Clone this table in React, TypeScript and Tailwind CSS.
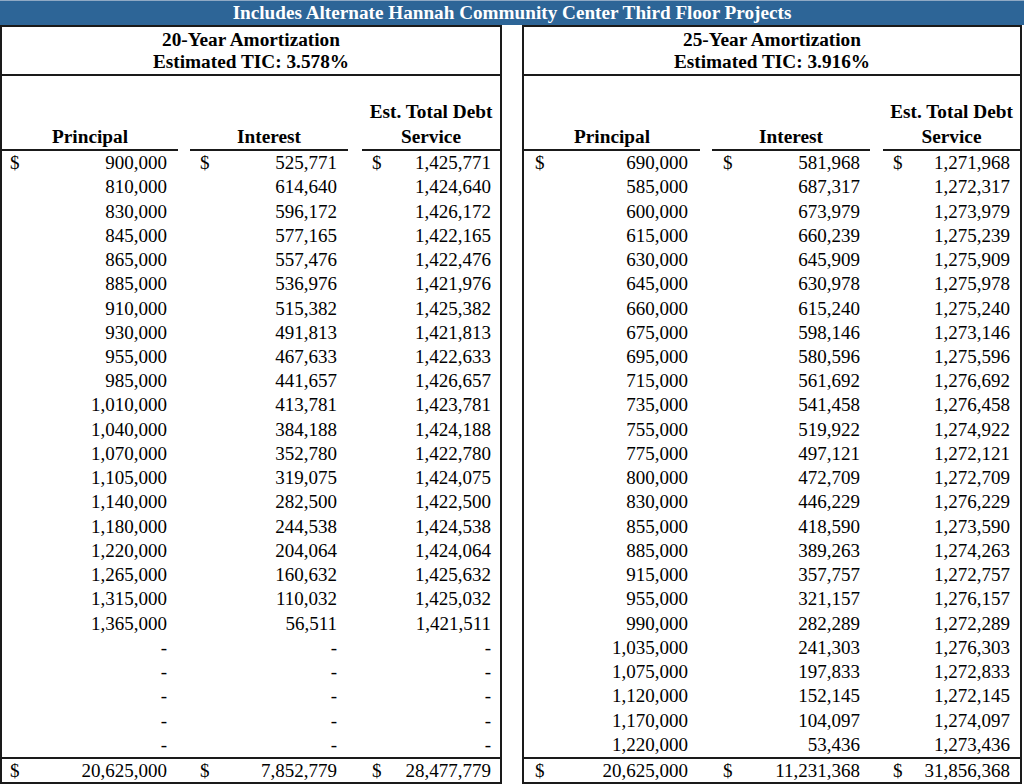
import React from "react";

type Cell = { dollar?: boolean; v: string };

const left20 = {
  p: ["900,000","810,000","830,000","845,000","865,000","885,000","910,000","930,000","955,000","985,000","1,010,000","1,040,000","1,070,000","1,105,000","1,140,000","1,180,000","1,220,000","1,265,000","1,315,000","1,365,000","-","-","-","-","-"],
  i: ["525,771","614,640","596,172","577,165","557,476","536,976","515,382","491,813","467,633","441,657","413,781","384,188","352,780","319,075","282,500","244,538","204,064","160,632","110,032","56,511","-","-","-","-","-"],
  t: ["1,425,771","1,424,640","1,426,172","1,422,165","1,422,476","1,421,976","1,425,382","1,421,813","1,422,633","1,426,657","1,423,781","1,424,188","1,422,780","1,424,075","1,422,500","1,424,538","1,424,064","1,425,632","1,425,032","1,421,511","-","-","-","-","-"],
  tot: ["20,625,000", "7,852,779", "28,477,779"],
};

const right25 = {
  p: ["690,000","585,000","600,000","615,000","630,000","645,000","660,000","675,000","695,000","715,000","735,000","755,000","775,000","800,000","830,000","855,000","885,000","915,000","955,000","990,000","1,035,000","1,075,000","1,120,000","1,170,000","1,220,000"],
  i: ["581,968","687,317","673,979","660,239","645,909","630,978","615,240","598,146","580,596","561,692","541,458","519,922","497,121","472,709","446,229","418,590","389,263","357,757","321,157","282,289","241,303","197,833","152,145","104,097","53,436"],
  t: ["1,271,968","1,272,317","1,273,979","1,275,239","1,275,909","1,275,978","1,275,240","1,273,146","1,275,596","1,276,692","1,276,458","1,274,922","1,272,121","1,272,709","1,276,229","1,273,590","1,274,263","1,272,757","1,276,157","1,272,289","1,276,303","1,272,833","1,272,145","1,274,097","1,273,436"],
  tot: ["20,625,000", "11,231,368", "31,856,368"],
};

function Num({ c, pad }: { c: Cell; pad: string }) {
  return (
    <div className={`flex items-center justify-between ${pad}`}>
      <span>{c.dollar ? "$" : ""}</span>
      <span>{c.v}</span>
    </div>
  );
}

function Panel({
  title,
  tic,
  data,
  grid,
  widthCls,
  pads,
}: {
  title: string;
  tic: string;
  data: { p: string[]; i: string[]; t: string[]; tot: string[] };
  grid: string;
  widthCls: string;
  pads: string[];
}) {
  return (
    <div className={`${widthCls} h-[759px] border-2 border-[#1a1a1a] flex flex-col`}>
      <div className="h-[47px] pt-[2px] flex flex-col items-center font-bold text-[19.3px] leading-[22px]">
        <div>{title}</div>
        <div>{tic}</div>
      </div>
      <div className="h-[2px] bg-[#1a1a1a]" />
      <div className={`grid ${grid} h-[75px] font-bold text-[19.3px] leading-[25px]`}>
        <div className="border-b-2 border-[#1a1a1a] flex flex-col justify-end items-center">
          <div>Principal</div>
        </div>
        <div />
        <div className="border-b-2 border-[#1a1a1a] flex flex-col justify-end items-center">
          <div>Interest</div>
        </div>
        <div />
        <div className="border-b-2 border-[#1a1a1a] flex flex-col justify-end items-center">
          <div>Est. Total Debt</div>
          <div>Service</div>
        </div>
      </div>
      <div className="flex flex-col flex-1">
        {data.p.map((p, idx) => {
          const first = idx === 0;
          return (
            <div key={idx} className={`grid ${grid} h-[24.24px] leading-[24px]`}>
              <Num c={{ dollar: first, v: p }} pad={pads[0]} />
              <div />
              <Num c={{ dollar: first, v: data.i[idx] }} pad={pads[1]} />
              <div />
              <Num c={{ dollar: first, v: data.t[idx] }} pad={pads[2]} />
            </div>
          );
        })}
      </div>
      <div className={`grid ${grid} h-[25px] border-t-2 border-[#1a1a1a] leading-[23px]`}>
        <Num c={{ dollar: true, v: data.tot[0] }} pad={pads[0]} />
        <div />
        <Num c={{ dollar: true, v: data.tot[1] }} pad={pads[1]} />
        <div />
        <Num c={{ dollar: true, v: data.tot[2] }} pad={pads[2]} />
      </div>
    </div>
  );
}

export default function App() {
  return (
    <div className="w-[1024px] h-[784px] overflow-hidden bg-white text-black text-[19px] [font-family:Liberation_Serif,Times_New_Roman,serif]">
      <div className="h-[25px] bg-[#2d6597] border-t border-[#8fa9c4] flex items-center justify-center text-white font-bold text-[19.2px] leading-[24px]">
        Includes Alternate Hannah Community Center Third Floor Projects
      </div>
      <div className="flex">
        <Panel
          title="20-Year Amortization"
          tic="Estimated TIC: 3.578%"
          data={left20}
          grid="grid-cols-[176px_12px_158px_14px_138px]"
          widthCls="w-[502px]"
          pads={["pl-[8px] pr-[11px]", "pl-[10px] pr-[11px]", "pl-[10px] pr-[9px]"]}
        />
        <div className="w-[20px]" />
        <Panel
          title="25-Year Amortization"
          tic="Estimated TIC: 3.916%"
          data={right25}
          grid="grid-cols-[176px_12px_158px_13px_137px]"
          widthCls="w-[500px]"
          pads={["pl-[11px] pr-[12px]", "pl-[11px] pr-[10px]", "pl-[10px] pr-[10px]"]}
        />
      </div>
    </div>
  );
}
